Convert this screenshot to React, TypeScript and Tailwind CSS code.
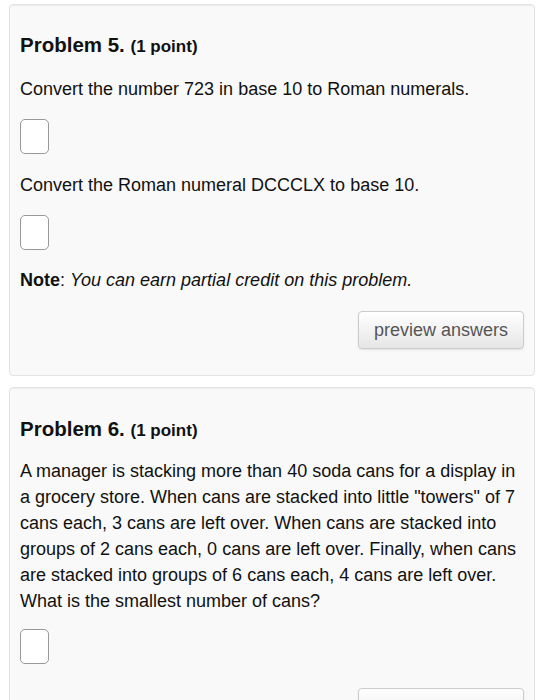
export default function App() {
  return (
    <div className="min-h-[700px] overflow-hidden bg-white px-[9px] pt-[4px] text-[18px] text-[#111] [font-family:'Liberation_Sans',Arial,sans-serif]">
      <section className="rounded-[4px] border border-[#e3e3e3] bg-[#f9f9f9] px-[10px] pb-[26px] pt-[28px] shadow-[inset_0_1px_1px_rgba(0,0,0,0.05)]">
        <h3 className="text-[20.5px] font-bold leading-[24px]">
          Problem 5. <span className="text-[17px]">(1 point)</span>
        </h3>
        <p className="mt-[17px] leading-[26px]">Convert the number 723 in base 10 to Roman numerals.</p>
        <div className="mt-[17px] h-[35px] w-[29px] rounded-[5px] border border-[#999] bg-white" />
        <p className="mt-[18px] leading-[26px]">Convert the Roman numeral DCCCLX to base 10.</p>
        <div className="mt-[17px] h-[35px] w-[29px] rounded-[5px] border border-[#999] bg-white" />
        <p className="mt-[17px] leading-[26px]">
          <b>Note</b>: <i>You can earn partial credit on this problem.</i>
        </p>
        <div className="mt-[18px] flex justify-end">
          <button className="h-[38px] rounded-[4px] border border-[#ccc] bg-gradient-to-b from-white to-[#e6e6e6] px-[15px] text-[18px] text-[#555] shadow-[0_1px_2px_rgba(0,0,0,0.1)]">
            preview answers
          </button>
        </div>
      </section>
      <section className="mt-[11px] rounded-[4px] border border-[#e3e3e3] bg-[#f9f9f9] px-[10px] pb-[25px] pt-[29px] shadow-[inset_0_1px_1px_rgba(0,0,0,0.05)]">
        <h3 className="text-[20.5px] font-bold leading-[24px]">
          Problem 6. <span className="text-[17px]">(1 point)</span>
        </h3>
        <p className="mt-[15px] leading-[26px]">
          A manager is stacking more than 40 soda cans for a display in a grocery store. When cans are stacked into
          little "towers" of 7 cans each, 3 cans are left over. When cans are stacked into groups of 2 cans each, 0
          cans are left over. Finally, when cans are stacked into groups of 6 cans each, 4 cans are left over. What is
          the smallest number of cans?
        </p>
        <div className="mt-[15px] h-[35px] w-[29px] rounded-[5px] border border-[#999] bg-white" />
        <div className="mt-[24px] flex justify-end">
          <button className="h-[38px] rounded-[4px] border border-[#ccc] bg-gradient-to-b from-white to-[#e6e6e6] px-[15px] text-[18px] text-[#555] shadow-[0_1px_2px_rgba(0,0,0,0.1)]">
            preview answers
          </button>
        </div>
      </section>
    </div>
  );
}
